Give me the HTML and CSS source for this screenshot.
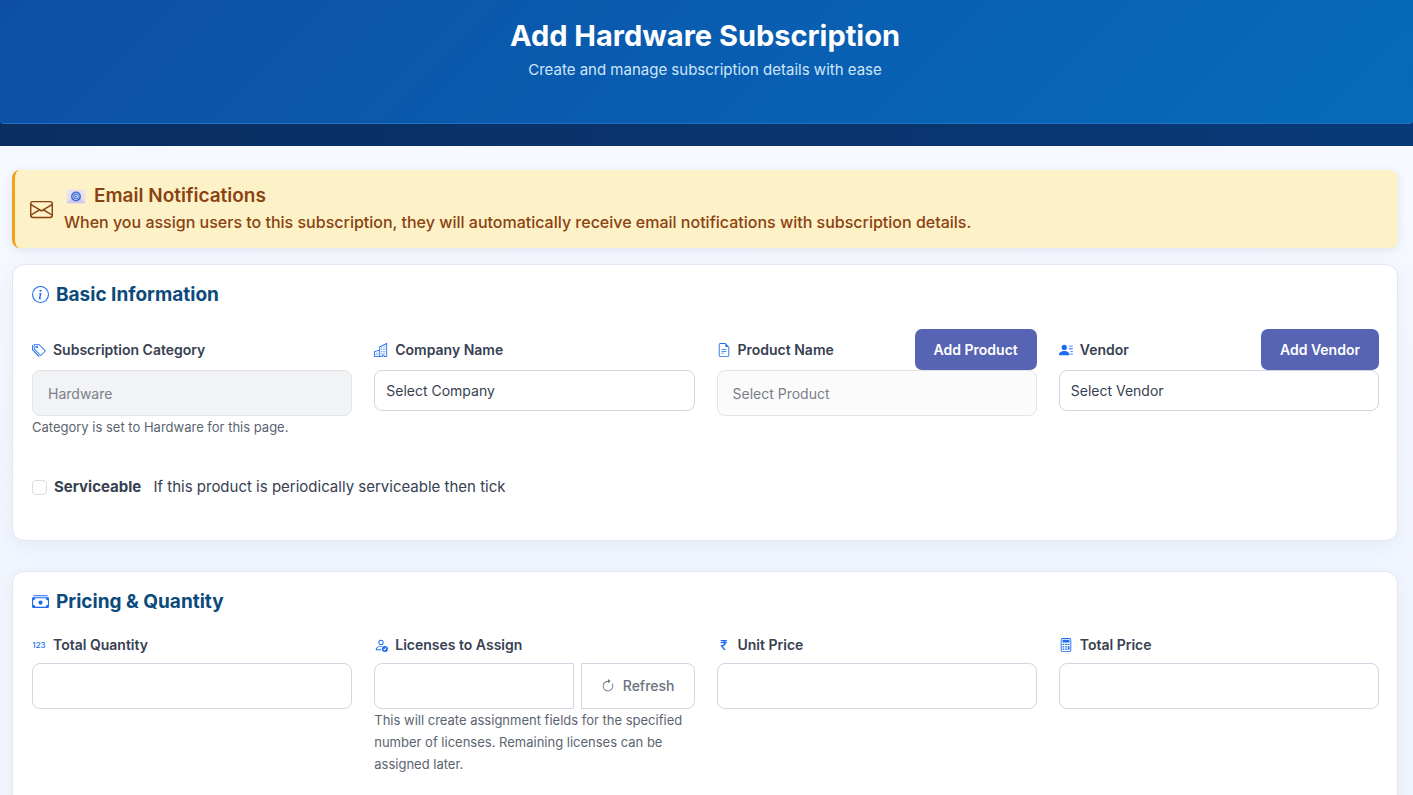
FILE: index.html
```
<!DOCTYPE html>
<html lang="en">
<head>
    <meta charset="UTF-8">
    <meta name="viewport" content="width=device-width, initial-scale=1">
    <title>Add Hardware Subscription</title>
    <link rel="stylesheet" href="styles.css">
</head>
<body>
    <header class="page-header">
        <div class="banner">
            <h1>Add Hardware Subscription</h1>
            <p>Create and manage subscription details with ease</p>
        </div>
    </header>
    <main class="content">
        <div class="notice">
            <svg class="notice-icon" viewBox="0 0 16 16" fill="currentColor" aria-hidden="true"><path d="M0 4a2 2 0 0 1 2-2h12a2 2 0 0 1 2 2v8a2 2 0 0 1-2 2H2a2 2 0 0 1-2-2zm2-1a1 1 0 0 0-1 1v.217l7 4.2 7-4.2V4a1 1 0 0 0-1-1zm13 2.383-4.708 2.825L15 11.105zm-.034 6.876-5.64-3.471L8 9.583l-1.326-.795-5.64 3.47A1 1 0 0 0 2 13h12a1 1 0 0 0 .966-.741M1 11.105l4.708-2.897L1 5.383z"/></svg>
            <div class="notice-text">
                <h2>
                    <svg class="mail" viewBox="0 0 24 18" aria-hidden="true">
                        <rect x="1" y="1" width="22" height="16" rx="1" fill="#e8deee"/>
                        <path d="M1 16 9 9h6l8 7v1H1z" fill="#d3c9ea"/>
                        <path d="m1 2 11 9 11-9" fill="none" stroke="#f3ebf5"/>
                        <circle cx="12" cy="9" r="6" fill="#3f6fd0"/>
                        <circle cx="12" cy="9" r="1.700" fill="none" stroke="#dfe8ff"/>
                        <path d="M13.700 7.300v2.400c0 1.600 2.100 1.100 2.100-.7A3.800 3.800 0 1 0 13.800 12.300" fill="none" stroke="#dfe8ff" stroke-width=".9"/>
                    </svg>
                    Email Notifications
                </h2>
                <p>When you assign users to this subscription, they will automatically receive email notifications with subscription details.</p>
            </div>
        </div>

        <form>
            <section class="card">
                <h2>
                    <svg viewBox="0 0 16 16" fill="currentColor" aria-hidden="true"><path d="M8 15A7 7 0 1 1 8 1a7 7 0 0 1 0 14m0 1A8 8 0 1 0 8 0a8 8 0 0 0 0 16"/><path d="m8.930 6.588-2.290.287-.082.380.450.083c.294.070.352.176.288.469l-.738 3.468c-.194.897.105 1.319.808 1.319.545 0 1.178-.252 1.465-.598l.088-.416c-.200.176-.492.246-.686.246-.275 0-.375-.193-.304-.533zM9 4.500a1 1 0 1 1-2 0 1 1 0 0 1 2 0"/></svg>
                    Basic Information
                </h2>
                <div class="fields basic">
                    <div class="field">
                        <div class="label-row">
                            <label for="category">
                                <svg viewBox="0 0 16 16" fill="currentColor" aria-hidden="true"><path d="M3 2v4.586l7 7L14.586 9l-7-7zM2 2a1 1 0 0 1 1-1h4.586a1 1 0 0 1 .707.293l7 7a1 1 0 0 1 0 1.414l-4.586 4.586a1 1 0 0 1-1.414 0l-7-7A1 1 0 0 1 2 6.586z"/><path d="M5.500 5a.5.5 0 1 1 0-1 .5.5 0 0 1 0 1m0 1a1.500 1.500 0 1 0 0-3 1.500 1.500 0 0 0 0 3M1 7.086a1 1 0 0 0 .293.707L8.750 15.250l-.043.043a1 1 0 0 1-1.414 0l-7-7A1 1 0 0 1 0 7.586V3a1 1 0 0 1 1-1z"/></svg>
                                Subscription Category
                            </label>
                        </div>
                        <input class="control" type="text" id="category" value="Hardware" disabled>
                        <small>Category is set to Hardware for this page.</small>
                    </div>
                    <div class="field">
                        <div class="label-row">
                            <label for="company">
                                <svg viewBox="0 0 16 16" fill="currentColor" aria-hidden="true"><path d="M14.763.075A.5.5 0 0 1 15 .5v15a.5.5 0 0 1-.5.5h-3a.5.5 0 0 1-.5-.5V14h-1v1.500a.5.5 0 0 1-.5.5h-9a.5.5 0 0 1-.5-.5V10a.5.5 0 0 1 .342-.474L6 7.640V4.500a.5.5 0 0 1 .276-.447l8-4a.5.5 0 0 1 .487.022M6 8.694 1 10.360V15h5zM7 15h2v-1.500a.5.5 0 0 1 .5-.5h2a.5.5 0 0 1 .5.5V15h2V1.309l-7 3.500z"/><path d="M2 11h1v1H2zm2 0h1v1H4zm-2 2h1v1H2zm2 0h1v1H4zm4-4h1v1H8zm2 0h1v1h-1zm-2 2h1v1H8zm2 0h1v1h-1zm2-2h1v1h-1zm0 2h1v1h-1zM8 7h1v1H8zm2 0h1v1h-1zm2 0h1v1h-1zM8 5h1v1H8zm2 0h1v1h-1zm2 0h1v1h-1zm0-2h1v1h-1z"/></svg>
                                Company Name
                            </label>
                        </div>
                        <select class="control select" id="company"><option>Select Company</option></select>
                    </div>
                    <div class="field">
                        <div class="label-row">
                            <label for="product">
                                <svg viewBox="0 0 16 16" fill="currentColor" aria-hidden="true"><path d="M5.500 7a.5.5 0 0 0 0 1h5a.5.5 0 0 0 0-1zM5 9.500a.5.5 0 0 1 .5-.5h5a.5.5 0 0 1 0 1h-5a.5.5 0 0 1-.5-.5m0 2a.5.5 0 0 1 .5-.5h2a.5.5 0 0 1 0 1h-2a.5.5 0 0 1-.5-.5"/><path d="M9.500 0H4a2 2 0 0 0-2 2v12a2 2 0 0 0 2 2h8a2 2 0 0 0 2-2V4.500zm0 1v2A1.500 1.500 0 0 0 11 4.500h2V14a1 1 0 0 1-1 1H4a1 1 0 0 1-1-1V2a1 1 0 0 1 1-1z"/></svg>
                                Product Name
                            </label>
                            <button class="btn-add" type="button">Add Product</button>
                        </div>
                        <input class="control pale" type="text" id="product" placeholder="Select Product" disabled>
                    </div>
                    <div class="field">
                        <div class="label-row">
                            <label for="vendor">
                                <svg viewBox="0 0 16 16" fill="currentColor" aria-hidden="true"><path d="M6 8a3 3 0 1 0 0-6 3 3 0 0 0 0 6m-5 6s-1 0-1-1 1-4 6-4 6 3 6 4-1 1-1 1zM11 3.500a.5.5 0 0 1 .5-.5h4a.5.5 0 0 1 0 1h-4a.5.5 0 0 1-.5-.5m.5 2.500a.5.5 0 0 0 0 1h4a.5.5 0 0 0 0-1zm2 3a.5.5 0 0 0 0 1h2a.5.5 0 0 0 0-1zm0 3a.5.5 0 0 0 0 1h2a.5.5 0 0 0 0-1z"/></svg>
                                Vendor
                            </label>
                            <button class="btn-add" type="button">Add Vendor</button>
                        </div>
                        <select class="control select" id="vendor"><option>Select Vendor</option></select>
                    </div>
                </div>
                <div class="check">
                    <input type="checkbox" id="serviceable">
                    <label for="serviceable"><b>Serviceable</b> If this product is periodically serviceable then tick</label>
                </div>
            </section>

            <section class="card">
                <h2>
                    <svg viewBox="0 0 16 16" fill="currentColor" aria-hidden="true"><path d="M1 3a1 1 0 0 1 1-1h12a1 1 0 0 1 1 1zm7 8a2 2 0 1 0 0-4 2 2 0 0 0 0 4"/><path d="M0 5a1 1 0 0 1 1-1h14a1 1 0 0 1 1 1v8a1 1 0 0 1-1 1H1a1 1 0 0 1-1-1zm3 0a2 2 0 0 1-2 2v4a2 2 0 0 1 2 2h10a2 2 0 0 1 2-2V7a2 2 0 0 1-2-2z"/></svg>
                    Pricing &amp; Quantity
                </h2>
                <div class="fields">
                    <div class="field">
                        <label for="quantity">
                            <span class="sign digits" aria-hidden="true">123</span>
                            Total Quantity
                        </label>
                        <input class="control" type="text" id="quantity">
                    </div>
                    <div class="field">
                        <label for="licenses">
                            <svg viewBox="0 0 16 16" fill="currentColor" aria-hidden="true"><path d="M12.500 16a3.500 3.500 0 1 0 0-7 3.500 3.500 0 0 0 0 7m1.679-4.493-1.335 2.226a.75.75 0 0 1-1.174.144l-.774-.773a.5.5 0 0 1 .708-.708l.547.548 1.170-1.951a.5.5 0 1 1 .858.514M11 5a3 3 0 1 1-6 0 3 3 0 0 1 6 0M8 7a2 2 0 1 0 0-4 2 2 0 0 0 0 4"/><path d="M8.256 14a4.500 4.500 0 0 1-.229-1.004H3c.001-.246.154-.986.832-1.664C4.484 10.680 5.711 10 8 10q.390 0 .740.025c.226-.341.496-.650.804-.918Q8.844 9.002 8 9c-5 0-6 3-6 4s1 1 1 1z"/></svg>
                            Licenses to Assign
                        </label>
                        <div class="input-group">
                            <input class="control" type="text" id="licenses">
                            <button class="btn-refresh" type="button">
                                <svg viewBox="0 0 16 16" fill="currentColor" aria-hidden="true"><path fill-rule="evenodd" d="M8 3a5 5 0 1 0 4.546 2.914.5.5 0 0 1 .908-.417A6 6 0 1 1 8 2z"/><path d="M8 4.466V.534a.250.250 0 0 1 .410-.192l2.360 1.966c.120.100.120.284 0 .384L8.410 4.658A.250.250 0 0 1 8 4.466"/></svg>
                                Refresh
                            </button>
                        </div>
                        <small>This will create assignment fields for the specified number of licenses. Remaining licenses can be assigned later.</small>
                    </div>
                    <div class="field">
                        <label for="unit-price">
                            <span class="sign" aria-hidden="true">₹</span>
                            Unit Price
                        </label>
                        <input class="control" type="text" id="unit-price">
                    </div>
                    <div class="field">
                        <label for="total-price">
                            <svg viewBox="0 0 16 16" fill="currentColor" aria-hidden="true"><path d="M12 1a1 1 0 0 1 1 1v12a1 1 0 0 1-1 1H4a1 1 0 0 1-1-1V2a1 1 0 0 1 1-1zM4 0a2 2 0 0 0-2 2v12a2 2 0 0 0 2 2h8a2 2 0 0 0 2-2V2a2 2 0 0 0-2-2z"/><path d="M4 2.500a.5.5 0 0 1 .5-.5h7a.5.5 0 0 1 .5.5v2a.5.5 0 0 1-.5.5h-7a.5.5 0 0 1-.5-.5zM4 6.500h2v1.500H4zm3 0h2v1.500H7zm3 0h2v1.500h-2zM4 9.300h2v1.500H4zm3 0h2v1.500H7zm3 0h2v4.200h-2zM4 12h2v1.500H4zm3 0h2v1.500H7z"/></svg>
                            Total Price
                        </label>
                        <input class="control" type="text" id="total-price">
                    </div>
                </div>
            </section>
        </form>
    </main>
</body>
</html>
```
FILE: styles.css
```
*{
    box-sizing:border-box;
    margin:0;
    padding:0;
}
body{
    font-family:Inter, "Noto Sans", sans-serif;
    font-size:15px;
    line-height:22px;
    color:#374151;
    background:linear-gradient(180deg, #f8faff 0, #f1f5fe 600px);
}
input,
select,
button{
    font:inherit;
}

/* header */
.page-header{
    padding-bottom:22px;
    background:linear-gradient(90deg, #0a2e60, #083a78);
}
.banner{
    padding:16px 3px 42px 0;
    border-bottom:1px solid #2371bd;
    border-radius:0 0 4px 4px;
    background:linear-gradient(135deg, #0d4fa6, #066bbb);
    color:#fff;
    text-align:center;
}
.banner h1{
    font-size:29px;
    line-height:40px;
    font-weight:700;
}
.banner p{
    margin-top:3px;
    color:#cfe6fa;
}

.content{
    padding:24px 15px 0 12px;
}

/* notice */
.notice{
    display:flex;
    align-items:center;
    gap:11px;
    padding:13px 15px;
    margin-bottom:16px;
    border-left:3px solid #f0a31a;
    border-radius:8px;
    background:#fdf1c7;
    color:#8a4210;
    box-shadow:0 2px 8px rgba(30, 50, 90, 0.1);
}
.notice-icon{
    width:23px;
    height:23px;
    flex:none;
}
.notice h2{
    display:flex;
    align-items:center;
    gap:6px;
    font-size:19px;
    line-height:26px;
    font-weight:600;
}
.notice p{
    font-size:16px;
    line-height:26px;
    font-weight:500;
}
.mail{
    width:24px;
    height:15px;
}

/* cards */
.card{
    padding:17px 18px 42px 19px;
    margin-bottom:30px;
    border:1px solid #e0e6f2;
    border-radius:12px;
    background:#fff;
    box-shadow:0 6px 20px rgba(30, 60, 120, 0.06);
}
.card h2{
    display:flex;
    align-items:center;
    gap:7px;
    margin-bottom:13px;
    font-size:19px;
    line-height:26px;
    font-weight:700;
    color:#0c4a7c;
}
.card h2 svg{
    width:17px;
    height:17px;
    margin-bottom:2px;
    color:#1a6cf0;
}
.fields{
    display:grid;
    grid-template-columns:repeat(4, minmax(0, 1fr));
    gap:22px;
}
.basic{
    margin-top:21px;
}
.field label{
    display:flex;
    align-items:center;
    gap:7px;
    font-size:14px;
    line-height:22px;
    font-weight:600;
}
.field > label{
    margin:6px 0 7px;
}
.field label svg{
    width:14px;
    height:14px;
    color:#1a6cf0;
}
.sign{
    display:flex;
    justify-content:center;
    width:14px;
    font-size:13px;
    font-weight:500;
    color:#1a6cf0;
}
.digits{
    font-size:8px;
}
.label-row{
    display:flex;
    justify-content:space-between;
    align-items:center;
    height:41px;
}
.control{
    display:block;
    width:100%;
    height:46px;
    padding:0 15px;
    border:1px solid #d3d6e2;
    border-radius:8px;
    background:#fff;
    color:#374151;
    font-size:14px;
}
.control:disabled{
    border-color:#e1e4e8;
    background:#f1f3f5;
    color:#7b8087;
}
.control.pale:disabled{
    background:#fbfbfc;
}
.control::placeholder{
    color:#7b8087;
}
.select{
    height:41px;
    padding:0 11px;
    appearance:none;
}
.field small{
    display:block;
    font-size:13px;
    line-height:22px;
    color:#5b6470;
}
.btn-add{
    height:41px;
    padding:0 19px;
    border:0;
    border-radius:7px;
    background:#5664b3;
    color:#fff;
    font-size:14px;
    font-weight:600;
}
.input-group{
    display:flex;
    gap:7px;
}
.input-group .control{
    flex:1;
    min-width:0;
    border-radius:8px 0 0 8px;
}
.btn-refresh{
    display:flex;
    align-items:center;
    gap:8px;
    padding:0 19px;
    border:1px solid #d3d6e2;
    border-radius:0 8px 8px 0;
    background:#fff;
    color:#6b7280;
    font-size:14px;
    font-weight:500;
}
.btn-refresh svg{
    width:14px;
    height:14px;
}

/* serviceable */
.check{
    display:flex;
    align-items:center;
    gap:7px;
    margin-top:38px;
}
.check input{
    width:15px;
    height:15px;
    border:1px solid #d8dbe2;
    border-radius:4px;
    background:#fff;
    appearance:none;
}
.check input:checked{
    background:#1a6cf0;
}
.check b{
    margin-right:8px;
    font-weight:700;
}
```
